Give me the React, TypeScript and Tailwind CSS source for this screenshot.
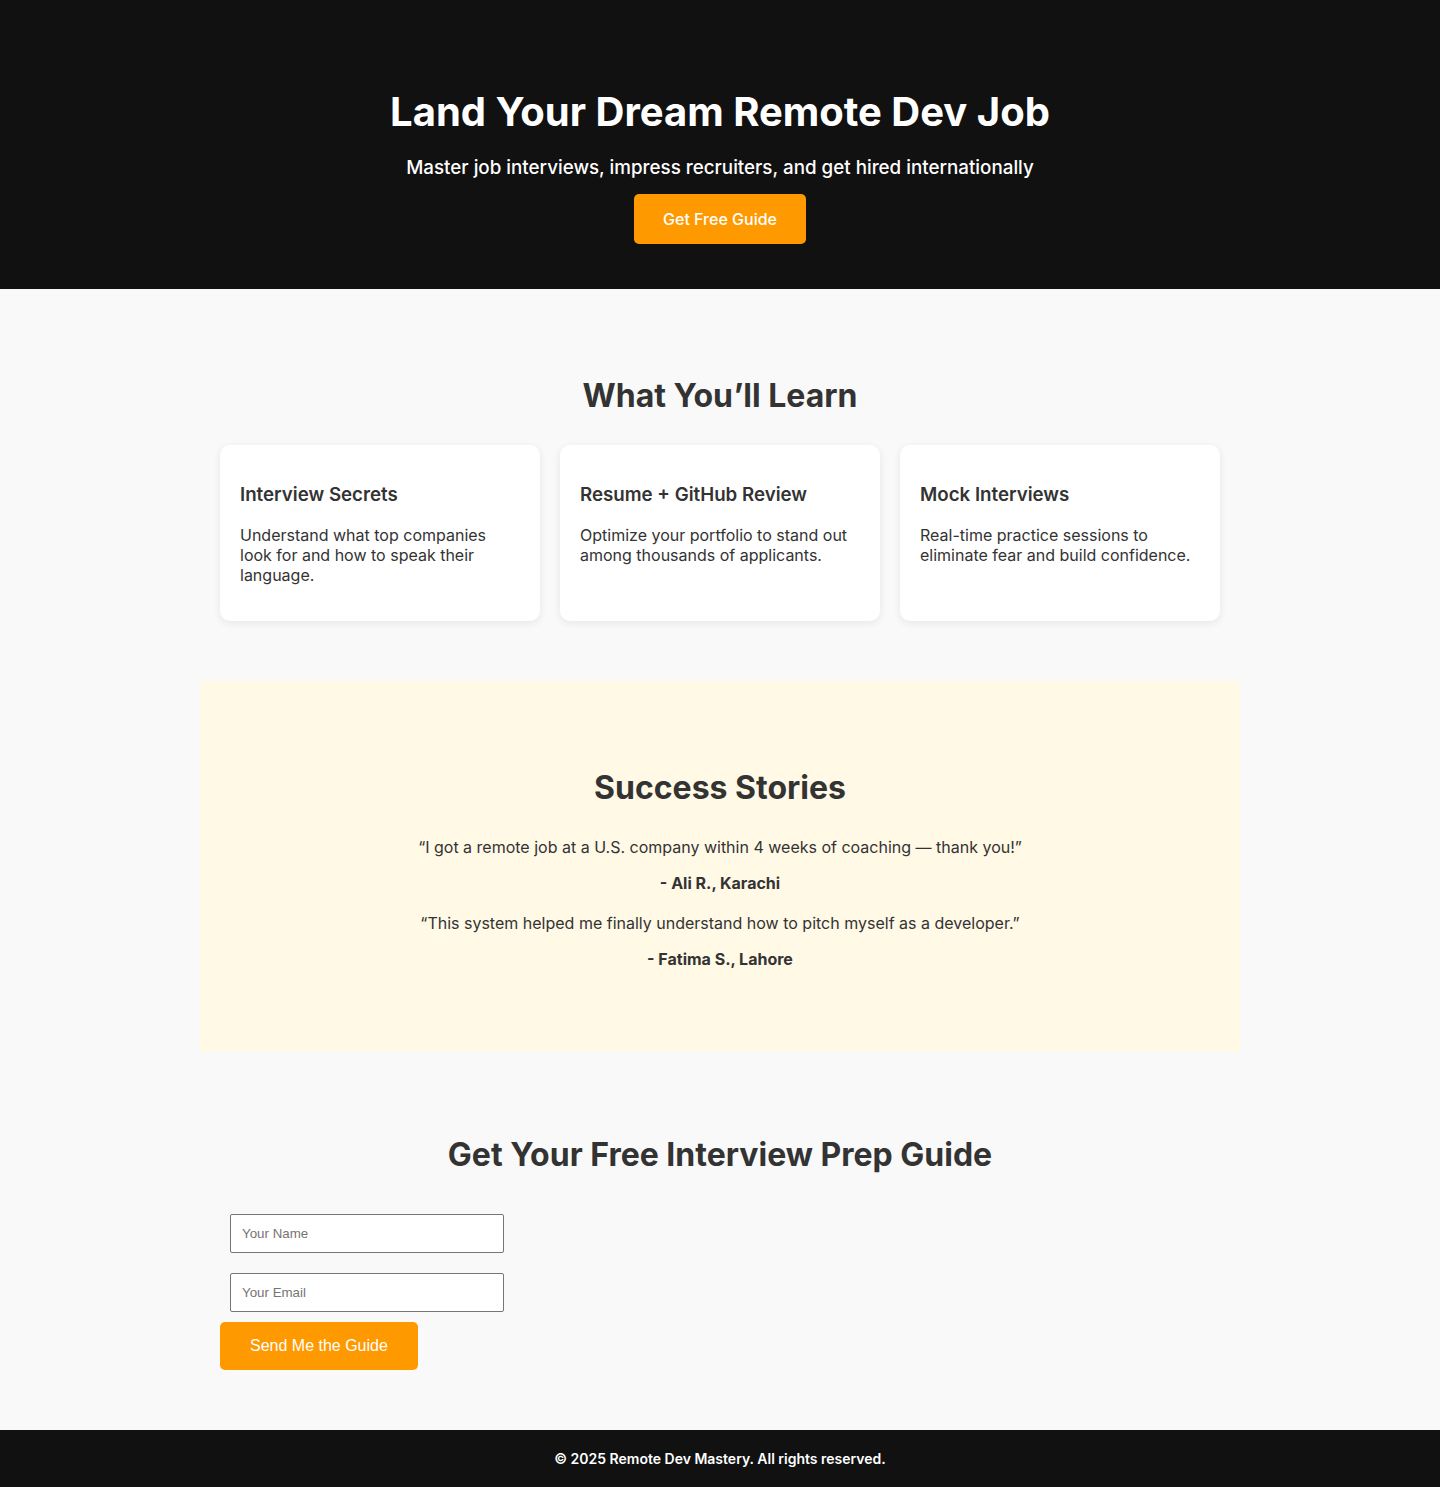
const features = [
  {
    title: "Interview Secrets",
    text: "Understand what top companies look for and how to speak their language.",
  },
  {
    title: "Resume + GitHub Review",
    text: "Optimize your portfolio to stand out among thousands of applicants.",
  },
  {
    title: "Mock Interviews",
    text: "Real-time practice sessions to eliminate fear and build confidence.",
  },
];

const stories = [
  {
    quote: "“I got a remote job at a U.S. company within 4 weeks of coaching — thank you!”",
    author: "- Ali R., Karachi",
  },
  {
    quote: "“This system helped me finally understand how to pitch myself as a developer.”",
    author: "- Fatima S., Lahore",
  },
];

export default function App() {
  return (
    <div className="min-h-screen bg-[#f9f9f9] text-[#333] font-['Inter','Noto_Sans',sans-serif]">
      {/* Hero */}
      <header className="bg-[#111111] text-white text-center pt-[88px] pb-[45px]">
        <h1 className="text-[40px] leading-[48px] font-bold">Land Your Dream Remote Dev Job</h1>
        <p className="mt-[20px] text-[18.8px] leading-[24px] font-medium">
          Master job interviews, impress recruiters, and get hired internationally
        </p>
        <a
          href="#signup"
          className="inline-block mt-[14px] bg-[#ff9900] text-white text-[16px] font-medium leading-[20px] px-[29px] py-[15px] rounded-[5px]"
        >
          Get Free Guide
        </a>
      </header>

      <main className="max-w-[1040px] mx-auto">
        {/* What you'll learn */}
        <section className="px-5 py-[60px] text-center">
          <h2 className="mt-[27px] text-[32px] leading-[39px] font-bold">What You’ll Learn</h2>
          <div className="mt-[30px] grid grid-cols-3 gap-5 text-left">
            {features.map((f) => (
              <div
                key={f.title}
                className="bg-white rounded-[10px] shadow-[0_2px_8px_rgba(0,0,0,0.08)] p-5 h-[176px]"
              >
                <h3 className="mt-[18px] text-[18.72px] leading-[23px] font-semibold">{f.title}</h3>
                <p className="mt-[19px] text-[16px] leading-[20px]">{f.text}</p>
              </div>
            ))}
          </div>
        </section>

        {/* Success stories */}
        <section className="bg-[#fff9e6] px-5 pt-[60px] pb-[63px] text-center">
          <h2 className="mt-[27px] text-[32px] leading-[39px] font-bold">Success Stories</h2>
          <div className="mt-[30px]">
            {stories.map((s) => (
              <div key={s.author} className="mb-[20px]">
                <p className="text-[16px] leading-[20px]">{s.quote}</p>
                <p className="mt-[16px] text-[16px] leading-[20px] font-bold">{s.author}</p>
              </div>
            ))}
          </div>
        </section>

        {/* Signup */}
        <section id="signup" className="px-5 py-[60px]">
          <h2 className="mt-[23px] text-[32px] leading-[39px] font-bold text-center">
            Get Your Free Interview Prep Guide
          </h2>
          <form className="mt-[40px] flex flex-col items-start font-['Liberation_Sans','Arial',sans-serif]">
            <input
              type="text"
              placeholder="Your Name"
              className="ml-[10px] w-[274px] h-[39px] px-[11px] bg-white border border-[#767676] rounded-[2px] text-[13.33px] placeholder:text-[#757575]"
            />
            <input
              type="email"
              placeholder="Your Email"
              className="ml-[10px] mt-[20px] w-[274px] h-[39px] px-[11px] bg-white border border-[#767676] rounded-[2px] text-[13.33px] placeholder:text-[#757575]"
            />
            <button
              type="button"
              className="mt-[10px] bg-[#ff9900] text-white text-[16px] leading-[18px] px-[30px] py-[15px] rounded-[5px]"
            >
              Send Me the Guide
            </button>
          </form>
        </section>
      </main>

      <footer className="bg-[#111111] text-white text-center py-[20px]">
        <p className="text-[14px] leading-[17px] font-semibold">© 2025 Remote Dev Mastery. All rights reserved.</p>
      </footer>
    </div>
  );
}
